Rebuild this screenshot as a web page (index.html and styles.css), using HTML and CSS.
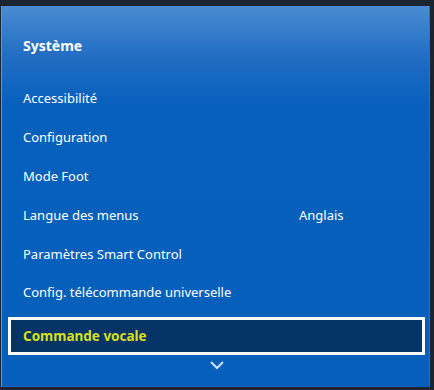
FILE: index.html
```html
<!DOCTYPE html>
<html lang="fr">
<head>
  <meta charset="UTF-8" />
  <title>Système</title>
  <link rel="stylesheet" href="styles.css">
</head>
<body>
  <div class="screen">
    <div class="panel">
      <h1 class="title">Système</h1>
      <ul class="menu">
        <li class="item">Accessibilité</li>
        <li class="item">Configuration</li>
        <li class="item">Mode Foot</li>
        <li class="item"><span class="label">Langue des menus</span><span class="value">Anglais</span></li>
        <li class="item">Paramètres Smart Control</li>
        <li class="item">Config. télécommande universelle</li>
        <li class="item selected">Commande vocale</li>
      </ul>
      <div class="more">
        <svg width="16" height="10" viewBox="0 0 16 10"><path d="M2 2 L8 8 L14 2" fill="none" stroke="#cfe0f5" stroke-width="2"/></svg>
      </div>
    </div>
  </div>
</body>
</html>
```

FILE: styles.css
```css
* {
  box-sizing: border-box;
}

body {
  margin: 0;
  background: #1c2431;
  font-family: 'Noto Sans', 'Open Sans', sans-serif;
}

.screen {
  width: 434px;
  height: 390px;
  padding: 6px 4px 3px 1px;
}

.panel {
  height: 100%;
  border-left: 1px solid #5f9ad8;
  border-right: 1px solid #2f6fb8;
  background: linear-gradient(180deg, #4a8bd2 0%, #1f6cc2 14%, #0760bc 26%, #0660bb 100%);
  display: flex;
  flex-direction: column;
  padding: 0 4px 0 6px;
}

.title {
  margin: 0;
  color: #fff;
  font-size: 14px;
  font-weight: bold;
  padding: 30px 0 0 15px;
  height: 73px;
}

.menu {
  list-style: none;
  margin: 0;
  padding: 0;
}

.item {
  display: flex;
  align-items: center;
  height: 38.8px;
  padding-left: 15px;
  color: #fff;
  font-size: 13px;
}

.label {
  width: 276px;
}

.selected {
  margin-top: 5px;
  height: 38px;
  padding-left: 12px;
  border: 3px solid #fff;
  background: #073466;
  color: #d9e021;
  font-size: 13.5px;
  font-weight: bold;
}

.more {
  display: flex;
  justify-content: center;
  padding-top: 5px;
}
```
